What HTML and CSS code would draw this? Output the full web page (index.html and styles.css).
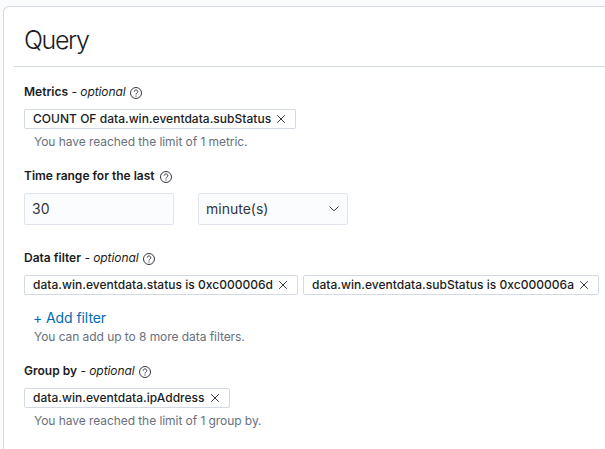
FILE: index.html
```html
<!DOCTYPE html>
<html lang="en">
<head>
<meta charset="utf-8">
<title>Query</title>
<link rel="stylesheet" href="styles.css">
</head>
<body>
<svg class="defs" width="0" height="0"><defs>
<symbol id="help" viewBox="0 0 14 14"><circle cx="7" cy="7" r="5.5"/><path d="M5.2 5.6a1.8 1.7 0 1 1 2.7 1.5Q7 7.5 7 8.5M7 9.500v1.100"/></symbol>
<symbol id="cross" viewBox="0 0 10 10"><path d="M1.200 1.200l7.600 7.600M8.800 1.200l-7.600 7.600"/></symbol>
</defs></svg>
<main class="panel">
<h1 class="title">Query</h1>
<hr class="rule">
<section class="field metrics">
<div class="label"><b>Metrics</b><i>- optional</i><svg class="help"><use href="#help"/></svg></div>
<div class="badges"><span class="badge"><span class="name">COUNT OF data.win.eventdata.subStatus</span><svg class="cross"><use href="#cross"/></svg></span></div>
<p class="hint">You have reached the limit of 1 metric.</p>
</section>
<section class="field range">
<div class="label"><b>Time range for the last</b><svg class="help"><use href="#help"/></svg></div>
<div class="controls"><div class="control">30</div><div class="control">minute(s)<svg class="chevron" viewBox="0 0 12 8"><path d="M1.500 1.500L5.200 5.200Q6 6 6.800 5.200L10.500 1.500"/></svg></div></div>
</section>
<section class="field filter">
<div class="label"><b>Data filter</b><i>- optional</i><svg class="help"><use href="#help"/></svg></div>
<div class="badges"><span class="badge"><span class="name">data.win.eventdata.status is 0xc000006d</span><svg class="cross"><use href="#cross"/></svg></span><span class="badge"><span class="name">data.win.eventdata.subStatus is 0xc000006a</span><svg class="cross"><use href="#cross"/></svg></span></div>
<a class="add">+ Add filter</a>
<p class="hint">You can add up to 8 more data filters.</p>
</section>
<section class="field group">
<div class="label"><b>Group by</b><i>- optional</i><svg class="help"><use href="#help"/></svg></div>
<div class="badges"><span class="badge"><span class="name">data.win.eventdata.ipAddress</span><svg class="cross"><use href="#cross"/></svg></span></div>
<p class="hint">You have reached the limit of 1 group by.</p>
</section>
</main>
</body>
</html>
```
FILE: styles.css
```css
* { box-sizing: border-box; }
body { margin: 0; height: 449px; padding: 6px 0 0 3px; background: #fafbfd; color: #343741; font-family: Inter, sans-serif; font-size: 12px; }
.defs { position: absolute; }
.panel { height: 443px; padding: 0 0 0 10px; background: #fff; border: solid #d3dae6; border-width: 1px 0 0 1px; border-radius: 6px 0 0 0; }
.title { margin: 0; padding: 13px 10px 0; height: 59px; font-size: 25px; line-height: 40px; font-weight: 300; letter-spacing: -1.4px; color: #1a1c21; }
.rule { margin: 0; border: 0; height: 1px; background: #d3dae6; }
.field { padding: 15px 0 0 10px; }
.metrics { height: 84px; }
.range { height: 82px; }
.filter { height: 113px; }
.label { display: flex; align-items: center; height: 18px; gap: 4px; color: #1a1c21; white-space: nowrap; }
.label b { font-weight: 600; }
.label i { letter-spacing: -0.08px; margin-left: -0.5px; }
.help { width: 14px; height: 14px; fill: none; stroke: #343741; stroke-width: 1; margin: 4px 0 0 -0.5px; }
.range .help { margin-left: 0; }
.badges { display: flex; gap: 5px; margin-top: 9px; }
.badge { display: flex; align-items: center; gap: 5px; height: 20px; padding: 0 9px 0 8px; border: 1px solid #d3dae6; border-radius: 2px; color: #1a1c21; font-weight: 500; white-space: nowrap; }
.name { letter-spacing: 0.025px; padding-bottom: 2px; }
.cross { width: 10px; height: 10px; fill: none; stroke: #343741; stroke-width: 1; }
.hint { margin: 4px 0 0 10px; line-height: 18px; letter-spacing: -0.06px; color: #69707d; }
.controls { display: flex; gap: 24px; margin-top: 9px; }
.control { display: flex; align-items: center; justify-content: space-between; width: 150px; height: 32px; padding: 0 8px 1px 7px; border: 1px solid #e0e4ee; border-radius: 2px; background: #fbfcfd; font-size: 14px; }
.chevron { width: 12px; height: 8px; fill: none; stroke: #343741; margin-right: -1px; }
.add { display: block; margin: 13px 0 0 9px; font-size: 14px; line-height: 20px; letter-spacing: -0.08px; color: #006bb4; }
.add + .hint { margin-top: 0; }
```
